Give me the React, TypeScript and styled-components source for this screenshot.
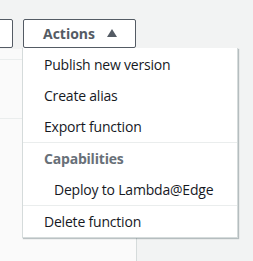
import React from 'react';
import styled, { createGlobalStyle } from 'styled-components';

const GlobalStyle = createGlobalStyle`
  body {
    margin: 0;
    background: #f2f3f3;
    font-family: "Open Sans", "Noto Sans", sans-serif;
    font-size: 14px;
    color: #16191f;
  }
`;

interface MenuItem {
  label: string;
  kind?: 'item' | 'header' | 'sub' | 'divider';
}

const items: MenuItem[] = [
  { label: 'Publish new version' },
  { label: 'Create alias' },
  { label: 'Export function' },
  { label: '', kind: 'divider' },
  { label: 'Capabilities', kind: 'header' },
  { label: 'Deploy to Lambda@Edge', kind: 'sub' },
  { label: '', kind: 'divider' },
  { label: 'Delete function' },
];

const App: React.FC = () => {
  return (
    <Page>
      <GlobalStyle />
      <Toolbar>
        <GhostButton />
        <ActionsWrap>
          <ActionsButton>
            Actions
            <Caret viewBox="0 0 10 8">
              <path d="M5 0 L10 8 L0 8 Z" fill="currentColor" />
            </Caret>
          </ActionsButton>
          <Menu>
            {items.map((item, i) =>
              item.kind === 'divider' ? (
                <Divider key={i} />
              ) : (
                <Item key={i} $kind={item.kind || 'item'}>
                  {item.label}
                </Item>
              )
            )}
          </Menu>
        </ActionsWrap>
      </Toolbar>
      <Body>
        <Panel>
          <PanelRow $h={10} />
          <PanelRow $h={58} />
        </Panel>
      </Body>
    </Page>
  );
};

const Page = styled.div`
  width: 253px;
  height: 261px;
  overflow: hidden;
  display: flex;
  flex-direction: column;
`;

const Toolbar = styled.div`
  display: flex;
  align-items: flex-start;
  gap: 10px;
  padding-top: 19px;
  margin-left: -30px;
`;

const GhostButton = styled.div`
  width: 41px;
  height: 27px;
  border: 1px solid #545b64;
  border-radius: 2px;
  background: #fff;
`;

const ActionsWrap = styled.div`
  position: relative;
`;

const ActionsButton = styled.button`
  box-sizing: border-box;
  width: 113px;
  height: 29px;
  display: flex;
  align-items: center;
  justify-content: center;
  gap: 12px;
  padding: 0 0 1px 1px;
  border: 1px solid #545b64;
  border-radius: 2px;
  background: #fff;
  color: #545b64;
  font-family: inherit;
  font-size: 14px;
  font-weight: 700;
`;

const Caret = styled.svg`
  width: 10px;
  height: 8px;
  margin-top: -1px;
`;

const Menu = styled.div`
  position: absolute;
  top: 29px;
  left: -1px;
  z-index: 2;
  width: 216px;
  box-sizing: border-box;
  background: #fff;
  border: 1px solid #d5dbdb;
  border-top: none;
  padding-top: 1px;
  box-shadow: 1px 1px 1px 0 rgba(0, 28, 36, 0.25);
`;

const Item = styled.div<{ $kind: string }>`
  height: 31px;
  line-height: 31px;
  padding-left: ${({ $kind }) => ($kind === 'sub' ? '31px' : '21px')};
  font-weight: ${({ $kind }) => ($kind === 'header' ? 700 : 400)};
  color: ${({ $kind }) => ($kind === 'header' ? '#687078' : '#16191f')};
  letter-spacing: -0.2px;
  white-space: nowrap;
`;

const Divider = styled.div`
  height: 1px;
  background: #eaeded;
`;

const Body = styled.div`
  flex: 1;
  display: flex;
  margin-top: 1px;
`;

const Panel = styled.div`
  width: 136px;
  background: #fafafa;
  border-right: 1px solid #d5dbdb;
  display: flex;
  flex-direction: column;
`;

const PanelRow = styled.div<{ $h: number }>`
  height: ${({ $h }) => $h}px;
  border-bottom: 1px solid #eaeded;
`;

export default App;
